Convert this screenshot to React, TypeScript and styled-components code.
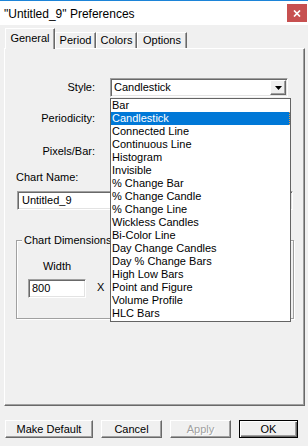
import React from 'react'
import styled, { createGlobalStyle } from 'styled-components'

const GlobalStyle = createGlobalStyle`
  html, body {
    margin: 0;
    padding: 0;
    background: #f0f0f0;
  }
  * {
    box-sizing: border-box;
  }
`

const Window = styled.div`
  width: 308px;
  height: 446px;
  background: #f0f0f0;
  font-family: 'Liberation Sans', Arial, sans-serif;
  font-size: 11px;
  color: #000;
  display: flex;
  flex-direction: column;
  overflow: hidden;
`

const TitleBar = styled.div`
  height: 25px;
  background: #fff;
  border-top: 1px solid #1c84d8;
  display: flex;
  align-items: flex-start;
  padding-left: 4px;
`

const TitleText = styled.span`
  font-size: 12px;
  line-height: 12px;
  margin-top: 7px;
`

const CloseButton = styled.div`
  margin-left: auto;
  margin-right: 1px;
  margin-top: 3px;
  width: 20px;
  height: 18px;
  background: #c75050;
  display: flex;
  align-items: center;
  justify-content: center;
`

const TabRow = styled.div`
  display: flex;
  align-items: flex-end;
  height: 20px;
  margin-top: 3px;
  padding-left: 5px;
`

const Tab = styled.div<{ $active?: boolean; $w: number }>`
  width: ${({ $w }) => $w}px;
  height: ${({ $active }) => ($active ? 21 : 16)}px;
  margin-bottom: ${({ $active }) => ($active ? -1 : 0)}px;
  position: relative;
  z-index: ${({ $active }) => ($active ? 2 : 0)};
  background: #f0f0f0;
  border-top: 1px solid #fff;
  border-left: 1px solid #fff;
  border-right: 1px solid #696969;
  box-shadow: inset -1px 0 0 #a0a0a0;
  display: flex;
  align-items: center;
  justify-content: center;
  padding-bottom: ${({ $active }) => ($active ? 2 : 0)}px;
  line-height: 13px;
`

const Panel = styled.div`
  position: relative;
  margin-left: 4px;
  width: 301px;
  height: 358px;
  border-top: 1px solid #fff;
  border-left: 1px solid #fff;
  border-right: 1px solid #696969;
  border-bottom: 1px solid #696969;
  box-shadow: inset -1px -1px 0 #a0a0a0;
  display: flex;
  flex-direction: column;
`

const FormRow = styled.div<{ $top: number }>`
  display: flex;
  align-items: center;
  height: 19px;
  margin-top: ${({ $top }) => $top}px;
  gap: 15px;
`

const RowLabel = styled.div`
  width: 90px;
  text-align: right;
  line-height: 13px;
`

const SunkenBox = styled.div<{ $w: number }>`
  width: ${({ $w }) => $w}px;
  height: 19px;
  background: #fff;
  border: 1px solid;
  border-color: #a0a0a0 #fff #fff #a0a0a0;
  box-shadow: inset 1px 1px 0 #696969, inset -1px -1px 0 #e3e3e3;
  display: flex;
  align-items: center;
  padding-left: 3px;
  line-height: 13px;
`

const Select = styled(SunkenBox)`
  padding-right: 1px;
`

const SelectValue = styled.span`
  flex: 1;
`

const ArrowButton = styled.div`
  width: 16px;
  height: 15px;
  background: #f0f0f0;
  border: 1px solid;
  border-color: #fff #696969 #696969 #fff;
  box-shadow: inset -1px -1px 0 #a0a0a0;
  display: flex;
  align-items: center;
  justify-content: center;
`

const PlainLabel = styled.div<{ $top: number; $left: number }>`
  margin-top: ${({ $top }) => $top}px;
  margin-left: ${({ $left }) => $left}px;
  line-height: 13px;
`

const NameInput = styled(SunkenBox)`
  margin-top: 7px;
  margin-left: 12px;
  padding-left: 4px;
`

const GroupBox = styled.div`
  position: relative;
  margin-top: 30px;
  margin-left: 11px;
  width: 278px;
  height: 79px;
  border: 1px solid #a0a0a0;
  box-shadow: inset 1px 1px 0 #fff, 1px 1px 0 #fff;
  padding: 19px 0 0 11px;
`

const Legend = styled.span`
  position: absolute;
  top: -7px;
  left: 5px;
  background: #f0f0f0;
  padding: 0 2px;
  line-height: 13px;
`

const DimGrid = styled.div`
  display: grid;
  grid-template-columns: 58px auto;
  row-gap: 6px;
  column-gap: 11px;
  align-items: center;
`

const DimLabel = styled.div`
  text-align: center;
  line-height: 13px;
`

const DimX = styled.div`
  line-height: 13px;
  margin-top: -3px;
`

const DropList = styled.div`
  position: absolute;
  left: 105px;
  top: 49px;
  width: 181px;
  background: #fff;
  border: 1px solid #646464;
  padding-bottom: 1px;
  z-index: 3;
`

const ListItem = styled.div<{ $selected?: boolean }>`
  height: 13px;
  line-height: 13px;
  padding-left: 1px;
  white-space: nowrap;
  background: ${({ $selected }) => ($selected ? '#0078d7' : 'transparent')};
  color: ${({ $selected }) => ($selected ? '#fff' : '#000')};
  border-right: 1px dotted ${({ $selected }) => ($selected ? '#f49a3c' : 'transparent')};
`

const ButtonRow = styled.div`
  display: flex;
  gap: 8px;
  margin-top: 14px;
  padding-left: 5px;
`

const Button = styled.div<{ $w: number; $default?: boolean; $disabled?: boolean }>`
  width: ${({ $w }) => $w}px;
  height: 18px;
  background: #f0f0f0;
  border: 1px solid;
  border-color: ${({ $default }) =>
    $default ? '#000' : '#fff #696969 #696969 #fff'};
  box-shadow: ${({ $default }) =>
    $default
      ? 'inset 1px 1px 0 #fff, inset -1px -1px 0 #696969, inset -2px -2px 0 #a0a0a0'
      : 'inset -1px -1px 0 #a0a0a0'};
  display: flex;
  align-items: center;
  justify-content: center;
  line-height: 13px;
  color: ${({ $disabled }) => ($disabled ? '#a0a0a0' : '#000')};
  text-shadow: ${({ $disabled }) => ($disabled ? '1px 1px 0 #fff' : 'none')};
`

const chartStyles = [
  'Bar',
  'Candlestick',
  'Connected Line',
  'Continuous Line',
  'Histogram',
  'Invisible',
  '% Change Bar',
  '% Change Candle',
  '% Change Line',
  'Wickless Candles',
  'Bi-Color Line',
  'Day Change Candles',
  'Day % Change Bars',
  'High Low Bars',
  'Point and Figure',
  'Volume Profile',
  'HLC Bars',
]

const tabs = [
  { label: 'General', width: 50, active: true },
  { label: 'Period', width: 41 },
  { label: 'Colors', width: 41 },
  { label: 'Options', width: 50 },
]

const App: React.FC = () => {
  return (
    <>
      <GlobalStyle />
      <Window>
        <TitleBar>
          <TitleText>"Untitled_9" Preferences</TitleText>
          <CloseButton>
            <svg width="8" height="7" viewBox="0 0 8 7">
              <path d="M1 0.5 L7 6.5 M7 0.5 L1 6.5" stroke="#fff" strokeWidth="1.7" />
            </svg>
          </CloseButton>
        </TitleBar>

        <TabRow>
          {tabs.map((tab) => (
            <Tab key={tab.label} $active={tab.active} $w={tab.width}>
              {tab.label}
            </Tab>
          ))}
        </TabRow>

        <Panel>
          <FormRow $top={29}>
            <RowLabel>Style:</RowLabel>
            <Select $w={178}>
              <SelectValue>Candlestick</SelectValue>
              <ArrowButton>
                <svg width="7" height="4" viewBox="0 0 7 4">
                  <path d="M0 0 H7 L3.5 4 Z" fill="#000" />
                </svg>
              </ArrowButton>
            </Select>
          </FormRow>
          <FormRow $top={12}>
            <RowLabel>Periodicity:</RowLabel>
          </FormRow>
          <FormRow $top={14}>
            <RowLabel>Pixels/Bar:</RowLabel>
          </FormRow>

          <PlainLabel $top={10} $left={11}>Chart Name:</PlainLabel>
          <NameInput $w={276}>Untitled_9</NameInput>

          <GroupBox>
            <Legend>Chart Dimensions</Legend>
            <DimGrid>
              <DimLabel>Width</DimLabel>
              <div />
              <SunkenBox $w={58}>800</SunkenBox>
              <DimX>X</DimX>
            </DimGrid>
          </GroupBox>

          <DropList>
            {chartStyles.map((s) => (
              <ListItem key={s} $selected={s === 'Candlestick'}>
                {s}
              </ListItem>
            ))}
          </DropList>
        </Panel>

        <ButtonRow>
          <Button $w={88}>Make Default</Button>
          <Button $w={61}>Cancel</Button>
          <Button $w={61} $disabled>Apply</Button>
          <Button $w={59} $default>OK</Button>
        </ButtonRow>
      </Window>
    </>
  )
}

export default App
